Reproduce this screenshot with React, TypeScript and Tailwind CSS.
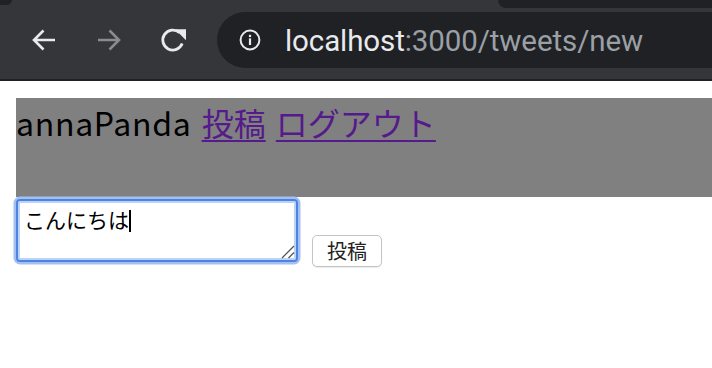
import React from 'react';

const BackIcon = ({ color }: { color: string }) => (
  <svg width="28" height="28" viewBox="0 0 28 28" fill="none">
    <path d="M25 14H4.5M13.5 4.5 4 14l9.5 9.5" stroke={color} strokeWidth="2.6" strokeLinecap="butt" />
  </svg>
);

const ForwardIcon = ({ color }: { color: string }) => (
  <svg width="28" height="28" viewBox="0 0 28 28" fill="none">
    <path d="M3 14h20.5M14.5 4.5 24 14l-9.5 9.5" stroke={color} strokeWidth="2.6" strokeLinecap="butt" />
  </svg>
);

const ReloadIcon = () => (
  <svg width="30" height="28" viewBox="0 0 30 28" fill="none">
    <path d="M23.2 17.5A10 10 0 1 1 20.5 6.6" stroke="#e8eaed" strokeWidth="2.8" />
    <path d="M16 3.2h11v11z" fill="#e8eaed" />
  </svg>
);

const InfoIcon = () => (
  <svg width="22" height="22" viewBox="0 0 22 22" fill="none">
    <circle cx="11" cy="11" r="9.4" stroke="#e8eaed" strokeWidth="2" />
    <rect x="9.9" y="9.4" width="2.2" height="6.6" fill="#e8eaed" />
    <rect x="9.9" y="5.8" width="2.2" height="2.3" fill="#e8eaed" />
  </svg>
);

const Grip = () => (
  <svg width="16" height="16" viewBox="0 0 16 16" fill="none">
    <path d="M3 15 15 3M9.5 15 15 9.5" stroke="#555" strokeWidth="1.3" />
  </svg>
);

const App = () => {
  return (
    <div className="w-[712px] h-[368px] overflow-hidden bg-white">
      {/* browser chrome */}
      <div className="relative h-[81px] bg-[#35363a] border-b-2 border-[#202124]">
        <div className="absolute -top-[6px] -left-[6px] w-[18px] h-[11px] rounded-full bg-[#202124]" />
        <div className="absolute top-0 left-[498px] right-0 h-[8px] rounded-bl-[10px] bg-[#202124]" />
        <div className="flex items-center h-full pt-[9px] pb-[8px]">
          <div className="flex items-center">
            <div className="ml-[30px]">
              <BackIcon color="#e8eaed" />
            </div>
            <div className="ml-[37px]">
              <ForwardIcon color="#8a8b8e" />
            </div>
            <div className="ml-[36px]">
              <ReloadIcon />
            </div>
          </div>
          <div className="ml-[28px] flex-1 h-[56px] rounded-l-full bg-[#202124] flex items-center pl-[22px]">
            <InfoIcon />
            <div className="ml-[24px] mt-[3px] text-[29.5px] tracking-[-0.1px] font-['Roboto',sans-serif] leading-none">
              <span className="text-[#e8eaed]">localhost</span>
              <span className="text-[#9aa0a6]">:3000/tweets/new</span>
            </div>
          </div>
        </div>
      </div>

      {/* page */}
      <div className="pt-[17px] pl-[16px] font-['Noto_Sans_CJK_JP',sans-serif]">
        <div className="h-[99px] bg-[#808080] text-[32px] leading-[48px] text-black [word-spacing:3px]">
          <span className="tracking-[0.7px]">annaPanda</span>{' '}
          <a href="#" className="text-[#551a8b] underline underline-offset-[4px] decoration-[2px]">
            投稿
          </a>{' '}
          <a href="#" className="text-[#551a8b] underline underline-offset-[4px] decoration-[2px]">
            ログアウト
          </a>
        </div>

        <div className="flex items-start">
          <div className="relative mt-[2px] w-[282px] h-[63px] border-2 border-[#4d84e3] rounded-[4px] shadow-[0_0_0_2.5px_#a3c0f3,inset_0_0_0_2px_#bcd3f7] bg-white pl-[6px] pt-[6px] text-[21px] leading-[24px] text-black">
            こんにちは
            <span className="inline-block align-[-4px] w-[2px] h-[22px] bg-black" />
            <div className="absolute right-[1px] bottom-[1px]">
              <Grip />
            </div>
          </div>
          <button className="ml-[14px] mt-[38px] w-[70px] h-[32px] rounded-[5px] border border-[#c4c4c4] bg-white text-[20px] leading-none text-[#222] shadow-[0_1px_1px_rgba(0,0,0,0.08)]">
            投稿
          </button>
        </div>
      </div>
    </div>
  );
};

export default App;
